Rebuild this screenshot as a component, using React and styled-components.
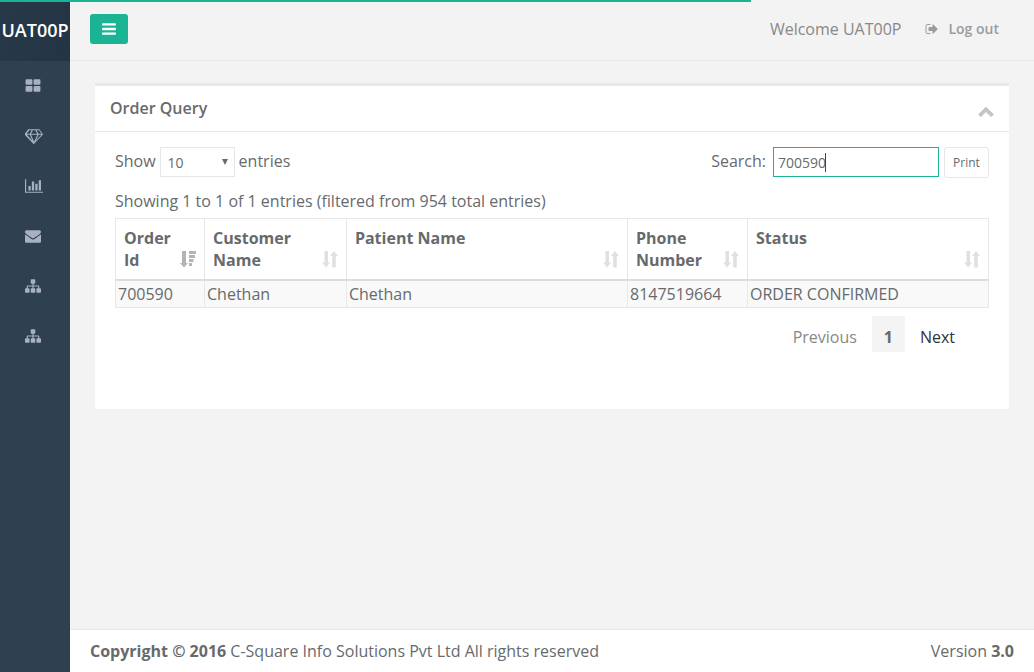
import React, { useState } from "react";
import styled, { createGlobalStyle } from "styled-components";

const c = {
  text: "#676a6c",
  line: "#e7e7e7",
  green: "#1ab394",
  navy: "#2f4050",
  page: "#f3f3f3",
};

const GlobalStyle = createGlobalStyle`
  *, *::before, *::after { box-sizing: border-box; }
  body {
    margin: 0;
    background: ${c.page};
    color: ${c.text};
    font: 16px/22px "Open Sans", sans-serif;
  }
  button, input, select { font-family: inherit; color: inherit; }
  a { color: inherit; text-decoration: none; }
`;

const Layout = styled.div`
  display: flex;
  min-height: 100vh;
`;

const LoadingBar = styled.div`
  position: fixed;
  top: 0;
  left: 0;
  width: calc(100% * 0.726);
  height: 2px;
  background: ${c.green};
  z-index: 2;
`;

const Sidebar = styled.nav`
  flex: 0 0 70px;
  background: ${c.navy};
`;

const Brand = styled.div`
  display: flex;
  align-items: center;
  justify-content: center;
  height: 61px;
  padding-bottom: 2px;
  background: linear-gradient(100deg, #273949, #243444);
  color: #fff;
  font-size: 18px;
  font-weight: 600;
`;

const Menu = styled.ul`
  list-style: none;
  margin: 0;
  padding: 0;
`;

const MenuLink = styled.a`
  display: flex;
  align-items: center;
  height: 50px;
  padding-left: 25px;
  color: #a7b1c2;
`;

const Glyph = styled.svg`
  display: block;
  flex: none;
  height: ${(p) => p.$size}px;
  width: auto;
  fill: currentColor;
`;

const Main = styled.div`
  flex: 1;
  min-width: 0;
  display: flex;
  flex-direction: column;
`;

const Topbar = styled.header`
  display: flex;
  align-items: center;
  justify-content: space-between;
  height: 61px;
  padding: 0 35px 3px 20px;
  border-bottom: 1px solid ${c.line};
`;

const ToggleButton = styled.button`
  display: flex;
  align-items: center;
  justify-content: center;
  width: 38px;
  height: 30px;
  padding: 0;
  border: 0;
  border-radius: 3px;
  background: ${c.green};
  color: #fff;
`;

const UserArea = styled.div`
  display: flex;
  align-items: center;
  gap: 24px;
  color: #888;
`;

const LogoutLink = styled.a`
  display: flex;
  align-items: center;
  gap: 9px;
  color: #999c9e;
  font-size: 14px;
  font-weight: 600;
`;

const Content = styled.main`
  flex: 1;
  padding: 22px 25px;
`;

const Panel = styled.section`
  background: #fff;
  border-top: 3px solid #e7eaec;
`;

const PanelHeader = styled.div`
  display: flex;
  align-items: center;
  justify-content: space-between;
  height: 46px;
  padding: 0 15px 2px;
  border-bottom: 1px solid ${c.line};
`;

const PanelTitle = styled.h5`
  margin: 0;
  font-size: 16px;
  font-weight: 600;
`;

const CollapseButton = styled.button`
  display: flex;
  padding: 6px 0 0;
  border: 0;
  background: none;
  color: #c4c4c4;
  path {
    stroke: currentColor;
    stroke-width: 90;
  }
`;

const PanelBody = styled.div`
  padding: 15px 20px 57px;
`;

const Toolbar = styled.div`
  display: flex;
  justify-content: space-between;
  align-items: flex-start;
`;

const Field = styled.div`
  display: flex;
  align-items: flex-start;
  gap: ${(p) => p.$gap}px;
  label, span { line-height: 28px; }
`;

const SelectBox = styled.div`
  position: relative;
  svg {
    position: absolute;
    right: 7px;
    top: 12px;
    pointer-events: none;
  }
`;

const Select = styled.select`
  appearance: none;
  display: block;
  width: 75px;
  height: 30px;
  padding: 0 7px;
  border: 1px solid #e5e6e7;
  border-radius: 0;
  background: #fff;
  font-size: 14px;
`;

const SearchGroup = styled.div`
  display: flex;
  align-items: flex-start;
  gap: 5px;
`;

const SearchBox = styled.div`
  position: relative;
`;

const SearchInput = styled.input`
  display: block;
  width: 166px;
  height: 30px;
  padding: 0 4px;
  border: 1px solid ${c.green};
  border-radius: 0;
  outline: 0;
  background: #fff;
  font-size: 14px;
  caret-color: transparent;
`;

const Caret = styled.i`
  position: absolute;
  left: 52px;
  top: 6px;
  width: 1px;
  height: 19px;
  background: #444;
`;

const PrintButton = styled.button`
  height: 31px;
  width: 45px;
  padding: 0;
  border: 1px solid ${c.line};
  border-radius: 3px;
  background: #fff;
  font-size: 12px;
`;

const Summary = styled.p`
  margin: 12px 0 6px;
`;

const Table = styled.table`
  width: 100%;
  table-layout: fixed;
  border-collapse: collapse;
  border: 1px solid #e7e7e7;
`;

const HeadCell = styled.th`
  width: ${(p) => p.$width};
  height: 61px;
  padding: 8px;
  border: 1px solid #e7e7e7;
  border-bottom: 2px solid #ddd;
  text-align: left;
  vertical-align: top;
  font-weight: 700;
`;

const HeadContent = styled.div`
  display: flex;
  justify-content: space-between;
  align-items: flex-end;
  height: 44px;
  padding-bottom: 2px;
  color: ${(p) => (p.$sorted ? "#b4b4b4" : "#e0e0e0")};
`;

const HeadLabel = styled.span`
  align-self: flex-start;
  color: ${c.text};
`;

const Cell = styled.td`
  height: 27px;
  padding: 2px;
  border: 1px solid #e7e7e7;
  background: #f9f9f9;
`;

const Pagination = styled.div`
  display: flex;
  justify-content: flex-end;
  margin-top: 8px;
  padding-right: 19px;
`;

const PageButton = styled.button`
  height: 36px;
  min-width: 33px;
  padding: 6px 15px 0;
  border: 0;
  font-size: 16px;
  line-height: 22px;
  background: ${(p) => (p.$current ? "#f4f4f4" : "transparent")};
  color: ${(p) => (p.$strong ? "#333" : p.$current ? c.text : "#888")};
  font-weight: ${(p) => (p.$current ? 700 : 400)};
  ${(p) => p.$current && "padding-left: 0; padding-right: 0;"}
`;

const Footer = styled.footer`
  display: flex;
  justify-content: space-between;
  padding: 10px 20px;
  border-top: 1px solid ${c.line};
  background: #fff;
`;

const icons = {
  grid: [1792, "M832 1024v384q0 52-38 90t-90 38h-512q-52 0-90-38t-38-90v-384q0-52 38-90t90-38h512q52 0 90 38t38 90zm0-768v384q0 52-38 90t-90 38h-512q-52 0-90-38t-38-90v-384q0-52 38-90t90-38h512q52 0 90 38t38 90zm896 768v384q0 52-38 90t-90 38h-512q-52 0-90-38t-38-90v-384q0-52 38-90t90-38h512q52 0 90 38t38 90zm0-768v384q0 52-38 90t-90 38h-512q-52 0-90-38t-38-90v-384q0-52 38-90t90-38h512q52 0 90 38t38 90z"],
  diamond: [2048, "M212 768l623 665-300-665h-323zm812 772l349-772h-698l349 772zm-486-900l204-384h-262l-288 384h346zm675 793l623-665h-323l-300 665zm-531-793h684l-204-384h-276zm828 0h346l-288-384h-262zm96-487l384 512q14 18 13 41.5t-17 40.5l-960 1024q-18 20-47 20t-47-20l-960-1024q-16-17-17-40.5t13-41.5l384-512q18-26 51-26h1152q33 0 51 26z"],
  chart: [2048, "M640 896v512h-256v-512h256zm384-512v1024h-256v-1024h256zm1024 1152v128h-2048v-1536h128v1408h1920zm-640-896v768h-256v-768h256zm384-384v1152h-256v-1152h256z"],
  mail: [1792, "M1792 710v794q0 66-47 113t-113 47h-1472q-66 0-113-47t-47-113v-794q44 49 101 87 362 246 497 345 57 42 92.5 65.5t94.5 48 110 24.5h2q51 0 110-24.5t94.5-48 92.5-65.5q170-123 498-345 57-39 100-87zm0-294q0 79-49 151t-122 123q-376 261-468 325-10 7-42.5 31t-54 38.5-52 32.5-57.5 27-50 9h-2q-23 0-50-9t-57.5-27-52-32.5-54-38.5-42.5-31q-91-64-262-182.5t-205-142.5q-62-42-117-115.5t-55-136.5q0-78 41.5-130t118.5-52h1472q65 0 112.5 47t47.5 113z"],
  sitemap: [1792, "M1792 1248v320q0 40-28 68t-68 28h-320q-40 0-68-28t-28-68v-320q0-40 28-68t68-28h96v-192h-512v192h96q40 0 68 28t28 68v320q0 40-28 68t-68 28h-320q-40 0-68-28t-28-68v-320q0-40 28-68t68-28h96v-192h-512v192h96q40 0 68 28t28 68v320q0 40-28 68t-68 28h-320q-40 0-68-28t-28-68v-320q0-40 28-68t68-28h96v-192q0-52 38-90t90-38h512v-192h-96q-40 0-68-28t-28-68v-320q0-40 28-68t68-28h320q40 0 68 28t28 68v320q0 40-28 68t-68 28h-96v192h512q52 0 90 38t38 90v192h96q40 0 68 28t28 68z"],
  bars: [1792, "M1664 1344v128q0 26-19 45t-45 19h-1408q-26 0-45-19t-19-45v-128q0-26 19-45t45-19h1408q26 0 45 19t19 45zm0-512v128q0 26-19 45t-45 19h-1408q-26 0-45-19t-19-45v-128q0-26 19-45t45-19h1408q26 0 45 19t19 45zm0-512v128q0 26-19 45t-45 19h-1408q-26 0-45-19t-19-45v-128q0-26 19-45t45-19h1408q26 0 45 19t19 45z"],
  logout: [1792, "M704 1440q0 4 1 20t.5 26.5-3 23.5-10 19.5-20.5 6.5h-320q-119 0-203.5-84.5t-84.5-203.5v-704q0-119 84.5-203.5t203.5-84.5h320q13 0 22.5 9.5t9.5 22.5q0 4 1 20t.5 26.5-3 23.5-10 19.5-20.5 6.5h-320q-66 0-113 47t-47 113v704q0 66 47 113t113 47h312l11.5 1 11.5 3 8 5.5 7 9 2 13.5zm928-544q0 26-19 45l-544 544q-19 19-45 19t-45-19-19-45v-288h-448q-26 0-45-19t-19-45v-384q0-26 19-45t45-19h448v-288q0-26 19-45t45-19 45 19l544 544q19 19 19 45z"],
  up: [1792, "M1683 1331l-166 165q-19 19-45 19t-45-19l-531-531-531 531q-19 19-45 19t-45-19l-166-165q-19-19-19-45.5t19-45.5l742-741q19-19 45-19t45 19l742 741q19 19 19 45.5t-19 45.5z"],
};

function Icon({ name, size = 16 }) {
  const [width, path] = icons[name];
  return (
    <Glyph $size={size} viewBox={`0 0 ${width} 1792`} aria-hidden="true">
      <path d={path} />
    </Glyph>
  );
}

function SortIcon({ sorted }) {
  return (
    <Glyph $size={18} viewBox="0 0 16 18" aria-hidden="true">
      {sorted ? (
        <path d="M2 0h4v12h2l-4 4.500-4-4.500h2zM9 0h7v3H9zM9 4h6v3H9zM9 8h4.500v3H9zM9 12h3v3H9z" />
      ) : (
        <path d="M2.500 0h3.500v11.500H8l-4 5-4-5h2.500zM12 0l4 5h-2.200v11.500h-3.600V5H8z" />
      )}
    </Glyph>
  );
}

const menu = [
  ["Dashboard", "grid"],
  ["Orders", "diamond"],
  ["Reports", "chart"],
  ["Messages", "mail"],
  ["Stores", "sitemap"],
  ["Users", "sitemap"],
];

const columns = [
  { label: "Order Id", width: "10.2%", sorted: true },
  { label: "Customer Name", width: "16.25%" },
  { label: "Patient Name", width: "32.2%" },
  { label: "Phone Number", width: "13.75%" },
  { label: "Status", width: "27.6%" },
];

const rows = [["700590", "Chethan", "Chethan", "8147519664", "ORDER CONFIRMED"]];

export default function App() {
  const [query, setQuery] = useState("700590");
  return (
    <>
      <GlobalStyle />
      <LoadingBar />
      <Layout>
        <Sidebar>
          <Brand>UAT00P</Brand>
          <Menu>
            {menu.map(([label, icon]) => (
              <li key={label}>
                <MenuLink href="#" aria-label={label}>
                  <Icon name={icon} />
                </MenuLink>
              </li>
            ))}
          </Menu>
        </Sidebar>
        <Main>
          <Topbar>
            <ToggleButton aria-label="Toggle menu">
              <Icon name="bars" />
            </ToggleButton>
            <UserArea>
              <span>Welcome UAT00P</span>
              <LogoutLink href="#">
                <Icon name="logout" size={14} />
                Log out
              </LogoutLink>
            </UserArea>
          </Topbar>
          <Content>
            <Panel>
              <PanelHeader>
                <PanelTitle>Order Query</PanelTitle>
                <CollapseButton aria-label="Collapse">
                  <Icon name="up" />
                </CollapseButton>
              </PanelHeader>
              <PanelBody>
                <Toolbar>
                  <Field $gap={4}>
                    <label htmlFor="length">Show</label>
                    <SelectBox>
                      <Select id="length" defaultValue="10">
                        <option>10</option>
                        <option>25</option>
                        <option>50</option>
                      </Select>
                      <Glyph $size={6} viewBox="0 0 6 6" aria-hidden="true">
                        <path d="M0 0h6L3 6z" />
                      </Glyph>
                    </SelectBox>
                    <span>entries</span>
                  </Field>
                  <Field $gap={7}>
                    <label htmlFor="search">Search:</label>
                    <SearchGroup>
                      <SearchBox>
                        <SearchInput id="search" value={query} onChange={(e) => setQuery(e.target.value)} />
                        <Caret />
                      </SearchBox>
                      <PrintButton>Print</PrintButton>
                    </SearchGroup>
                  </Field>
                </Toolbar>
                <Summary>Showing 1 to 1 of 1 entries (filtered from 954 total entries)</Summary>
                <Table>
                  <thead>
                    <tr>
                      {columns.map((col) => (
                        <HeadCell key={col.label} $width={col.width}>
                          <HeadContent $sorted={col.sorted}>
                            <HeadLabel>{col.label}</HeadLabel>
                            <SortIcon sorted={col.sorted} />
                          </HeadContent>
                        </HeadCell>
                      ))}
                    </tr>
                  </thead>
                  <tbody>
                    {rows.map((row) => (
                      <tr key={row[0]}>
                        {row.map((value, i) => (
                          <Cell key={i}>{value}</Cell>
                        ))}
                      </tr>
                    ))}
                  </tbody>
                </Table>
                <Pagination>
                  <PageButton>Previous</PageButton>
                  <PageButton $current>1</PageButton>
                  <PageButton $strong>Next</PageButton>
                </Pagination>
              </PanelBody>
            </Panel>
          </Content>
          <Footer>
            <span>
              <strong>Copyright © 2016</strong> C-Square Info Solutions Pvt Ltd All rights reserved
            </span>
            <span>
              Version <strong>3.0</strong>
            </span>
          </Footer>
        </Main>
      </Layout>
    </>
  );
}
